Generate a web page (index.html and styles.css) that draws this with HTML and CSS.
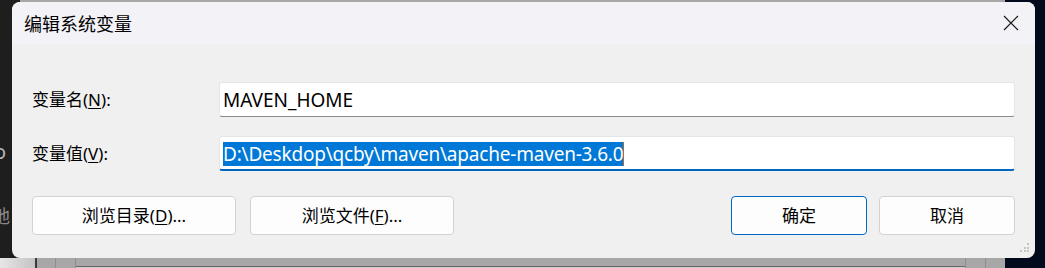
FILE: index.html
```html
<!DOCTYPE html>
<html lang="zh-CN">
<head>
<meta charset="utf-8">
<title>编辑系统变量</title>
<link rel="stylesheet" href="styles.css">
</head>
<body>
<div class="desktop">
  <div class="bg-left"><span class="bg-o">o</span><span class="bg-di">地</span></div>
  <div class="bg-right"></div>
  <div class="bg-bottom-left"></div>
  <div class="bg-bottom-bar"></div>
  <div class="bg-vline v1"></div>
  <div class="bg-vline v2"></div>
  <div class="bg-vline v3"></div>
  <div class="bg-vline v4"></div>

  <div class="dialog">
    <div class="titlebar">
      <span class="title">编辑系统变量</span>
      <div class="close">
        <svg width="16" height="16" viewBox="0 0 16 16"><path d="M1 1 L15 15 M15 1 L1 15" stroke="#1a1a1a" stroke-width="1.2" fill="none"/></svg>
      </div>
    </div>
    <div class="content">
      <div class="fields">
        <label class="label">变量名(<u>N</u>):</label>
        <div class="textbox">MAVEN_HOME</div>
        <label class="label">变量值(<u>V</u>):</label>
        <div class="textbox focused"><span class="sel">D:\Deskdop\qcby\maven\apache-maven-3.6.0</span><span class="caret"></span></div>
      </div>
      <div class="buttons">
        <div class="left-buttons">
          <button class="btn wide">浏览目录(<u>D</u>)...</button>
          <button class="btn wide">浏览文件(<u>F</u>)...</button>
        </div>
        <div class="right-buttons">
          <button class="btn narrow default">确定</button>
          <button class="btn narrow">取消</button>
        </div>
      </div>
    </div>
    <div class="grip">
      <i class="d r0c2"></i>
      <i class="d r1c1"></i><i class="d r1c2"></i>
      <i class="d r2c0"></i><i class="d r2c1"></i><i class="d r2c2"></i>
    </div>
  </div>
</div>
</body>
</html>
```

FILE: styles.css
```css
html, body {
  margin: 0;
  padding: 0;
}
body {
  width: 1045px;
  height: 268px;
  overflow: hidden;
  font-family: "Noto Sans", "Noto Sans CJK SC", sans-serif;
  color: #000;
}
.desktop {
  position: relative;
  width: 1045px;
  height: 268px;
  background: #a7a7a7;
  overflow: hidden;
}
.bg-left {
  position: absolute;
  left: 0;
  top: 0;
  width: 20px;
  height: 258px;
  background: #1e1e1e;
}
.bg-o {
  position: absolute;
  left: -6px;
  top: 140px;
  color: #b8b8b8;
  font-size: 20px;
  line-height: 24px;
}
.bg-di {
  position: absolute;
  left: -8px;
  top: 203px;
  color: #8a8a8a;
  font-family: "Noto Sans CJK SC", sans-serif;
  font-size: 18px;
  line-height: 24px;
}
.bg-right {
  position: absolute;
  left: 1005px;
  top: 0;
  right: 0;
  bottom: 0;
  background: #020a1d;
}
.bg-bottom-left {
  position: absolute;
  left: 0;
  top: 258px;
  width: 35px;
  height: 10px;
  background: linear-gradient(90deg, #e6e6e6, #c4c4c4);
  border-right: 2px solid #3a3a3a;
}
.bg-bottom-bar {
  position: absolute;
  left: 75px;
  top: 266px;
  width: 890px;
  height: 2px;
  border-top: 1px solid #666;
  background: #cfcfcf;
}
.bg-vline {
  position: absolute;
  top: 258px;
  width: 1px;
  height: 10px;
  background: #8e8e8e;
}
.bg-vline.v1 { left: 55px; }
.bg-vline.v2 { left: 75px; }
.bg-vline.v3 { left: 965px; }
.bg-vline.v4 { left: 985px; }

.dialog {
  position: absolute;
  left: 12px;
  top: 2px;
  width: 1023px;
  height: 256px;
  border-radius: 8px;
  overflow: hidden;
  background: #f0f0f0;
  display: flex;
  flex-direction: column;
}
.titlebar {
  height: 42px;
  flex: none;
  background: #f3f2f7;
  display: flex;
  align-items: center;
  justify-content: space-between;
  padding-left: 12px;
}
.title {
  font-family: "Noto Sans CJK SC", sans-serif;
  font-size: 18px;
  line-height: 24px;
  color: #000;
}
.close {
  width: 46px;
  height: 42px;
  margin-right: 1px;
  display: flex;
  align-items: center;
  justify-content: center;
}
.close svg {
  display: block;
}
.content {
  flex: 1;
  padding: 38px 20px 23px 20px;
  display: flex;
  flex-direction: column;
  justify-content: space-between;
}
.fields {
  display: grid;
  grid-template-columns: 187px 1fr;
  row-gap: 19px;
  align-items: center;
}
.label {
  font-size: 17px;
  line-height: 24px;
  color: #000;
}
.label u, .btn u {
  text-underline-offset: 2px;
}
.textbox {
  box-sizing: border-box;
  height: 35px;
  background: #fff;
  border: 1px solid #e6e6e6;
  border-bottom: 1px solid #8a8a8a;
  border-radius: 3px;
  padding: 0 0 0 3px;
  display: flex;
  align-items: center;
  font-size: 19px;
  line-height: 24px;
  color: #000;
  white-space: nowrap;
}
.textbox.focused {
  border-bottom: 2px solid #0067c0;
  padding-top: 1px;
}
.sel {
  display: inline-block;
  height: 24px;
  line-height: 24px;
  background: #0078d7;
  color: #fff;
  letter-spacing: -0.2px;
}
.caret {
  display: inline-block;
  width: 1px;
  height: 24px;
  background: #b06a2a;
}
.buttons {
  display: flex;
  justify-content: space-between;
}
.left-buttons, .right-buttons {
  display: flex;
}
.left-buttons { gap: 14px; }
.right-buttons { gap: 12px; }
.btn {
  box-sizing: border-box;
  height: 39px;
  background: #fdfdfd;
  border: 1px solid #d2d2d2;
  border-radius: 4px;
  font-family: "Noto Sans", "Noto Sans CJK SC", sans-serif;
  font-size: 17px;
  line-height: 24px;
  color: #000;
  padding: 0;
  margin: 0;
}
.btn.wide { width: 204px; }
.btn.narrow { width: 136px; }
.btn.default {
  border: 1px solid #0067c0;
}
.grip {
  position: absolute;
  right: 5px;
  bottom: 5px;
  width: 10px;
  height: 10px;
}
.grip .d {
  position: absolute;
  width: 2px;
  height: 2px;
  background: #c4c4c4;
}
.r0c2 { left: 7px; top: 0; }
.r1c1 { left: 3.5px; top: 3.5px; }
.r1c2 { left: 7px; top: 3.5px; }
.r2c0 { left: 0; top: 7px; }
.r2c1 { left: 3.5px; top: 7px; }
.r2c2 { left: 7px; top: 7px; }
```
